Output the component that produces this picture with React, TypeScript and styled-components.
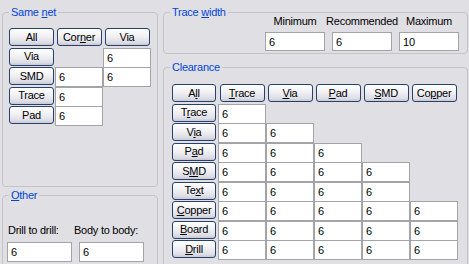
import React from 'react';
import styled, { createGlobalStyle } from 'styled-components';

const GlobalStyle = createGlobalStyle`
  html, body {
    margin: 0;
    background: #e0dfe3;
    font-family: "Liberation Sans", Arial, sans-serif;
    font-size: 11px;
    letter-spacing: -0.25px;
  }
`;

type Label = [string, string, string];

const sameHeader: Label[] = [
  ['All', '', ''],
  ['Cor', 'n', 'er'],
  ['Via', '', ''],
];

const clearanceHeader: Label[] = [
  ['', 'T', 'race'],
  ['', 'V', 'ia'],
  ['', 'P', 'ad'],
  ['', 'S', 'MD'],
  ['Co', 'p', 'per'],
];

const clearanceRows: { label: Label; count: number }[] = [
  { label: ['T', 'r', 'ace'], count: 1 },
  { label: ['V', 'i', 'a'], count: 2 },
  { label: ['P', 'a', 'd'], count: 3 },
  { label: ['S', 'M', 'D'], count: 4 },
  { label: ['Te', 'x', 't'], count: 4 },
  { label: ['', 'C', 'opper'], count: 5 },
  { label: ['', 'B', 'oard'], count: 5 },
  { label: ['', 'D', 'rill'], count: 5 },
];

function Caption({ label }: { label: Label }) {
  const [before, key, after] = label;
  return (
    <>
      {before}
      {key && <u>{key}</u>}
      {after}
    </>
  );
}

function App() {
  return (
    <>
      <GlobalStyle />
      <Page>
        <LeftColumn>
          <Group $height={175}>
            <Title>
              Same <u>n</u>et
            </Title>
            <SameNetGrid>
              {sameHeader.map((l, i) => (
                <HeadButton key={i}>
                  <Caption label={l} />
                </HeadButton>
              ))}
              <RowButton>Via</RowButton>
              <Cell $col={3} defaultValue="6" />
              <RowButton>SMD</RowButton>
              <Cell defaultValue="6" />
              <Cell defaultValue="6" />
              <RowButton>Trace</RowButton>
              <Cell defaultValue="6" />
              <RowButton>Pad</RowButton>
              <Cell defaultValue="6" />
            </SameNetGrid>
          </Group>
          <OtherGroup $height={80}>
            <Title>
              <u>O</u>ther
            </Title>
            <OtherLabels>
              <OtherLabel>Drill to drill:</OtherLabel>
              <OtherLabel>Body to body:</OtherLabel>
            </OtherLabels>
            <OtherInputs>
              <WideInput defaultValue="6" />
              <WideInput defaultValue="6" />
            </OtherInputs>
          </OtherGroup>
        </LeftColumn>
        <RightColumn>
          <Group $height={42}>
            <Title>
              Trace <u>w</u>idth
            </Title>
            <WidthGrid>
              <WidthLabel>Minimum</WidthLabel>
              <WidthLabel>Recommended</WidthLabel>
              <WidthLabel>Maximum</WidthLabel>
              <WidthInput defaultValue="6" />
              <WidthInput defaultValue="6" />
              <WidthInput defaultValue="10" />
            </WidthGrid>
          </Group>
          <ClearanceGroup $height={205}>
            <Title>Clearance</Title>
            <ClearanceGrid>
              <LabelButton>
                A<u>l</u>l
              </LabelButton>
              {clearanceHeader.map((l, i) => (
                <HeadButton key={i}>
                  <Caption label={l} />
                </HeadButton>
              ))}
              {clearanceRows.map((row, r) => (
                <React.Fragment key={r}>
                  <LabelButton>
                    <Caption label={row.label} />
                  </LabelButton>
                  {Array.from({ length: row.count }).map((_, c) => (
                    <Cell key={c} defaultValue="6" />
                  ))}
                </React.Fragment>
              ))}
            </ClearanceGrid>
          </ClearanceGroup>
        </RightColumn>
      </Page>
    </>
  );
}

const Page = styled.div`
  display: flex;
  gap: 5px;
  padding: 12px 0 0 2px;
  height: 264px;
  box-sizing: border-box;
  overflow: hidden;
`;
const LeftColumn = styled.div`
  width: 156px;
  display: flex;
  flex-direction: column;
`;
const RightColumn = styled.div`
  width: 305px;
  display: flex;
  flex-direction: column;
`;
const Group = styled.div<{ $height: number }>`
  position: relative;
  flex: none;
  box-sizing: border-box;
  height: ${p => p.$height}px;
  border: 1px solid #c4c3c8;
  border-radius: 4px;
`;
const OtherGroup = styled(Group)`
  margin-top: 8px;
  padding: 28px 0 0 4px;
`;
const ClearanceGroup = styled(Group)`
  margin-top: 13px;
  padding: 16px 0 0 8px;
`;
const Title = styled.span`
  position: absolute;
  top: -7px;
  left: 6px;
  padding: 0 2px;
  line-height: 13px;
  background: #e0dfe3;
  color: #0046d5;
`;
const Button = styled.button`
  box-sizing: border-box;
  height: 18px;
  padding: 0;
  border: 1px solid #28406a;
  border-radius: 3px;
  background: linear-gradient(#ffffff, #f1f1f4 45%, #dcdce5 85%, #c8c8d4);
  font-family: inherit;
  font-size: 11px;
  letter-spacing: inherit;
  color: #000;
  line-height: 15px;
  align-self: start;
`;
const HeadButton = styled(Button)`
  width: 45px;
  justify-self: center;
`;
const LabelButton = styled(Button)`
  width: 44px;
  grid-column: 1;
`;
const RowButton = styled(Button)`
  width: 45px;
  grid-column: 1;
  justify-self: center;
`;
const Input = styled.input`
  box-sizing: border-box;
  margin: 0;
  border: 1px solid #a4a3a8;
  background: #fff;
  font-family: inherit;
  font-size: 11px;
  color: #000;
  padding: 0 0 0 3px;
  outline: none;
`;
const Cell = styled(Input)<{ $col?: number }>`
  width: 100%;
  height: 20px;
  ${p => (p.$col ? `grid-column: ${p.$col};` : '')}
`;
const SameNetGrid = styled.div`
  display: grid;
  grid-template-columns: 47px 48px 48px;
  grid-auto-rows: 19.5px;
  padding: 15px 0 0 5px;
`;
const ClearanceGrid = styled.div`
  display: grid;
  grid-template-columns: 46px repeat(5, 48px);
  grid-auto-rows: 19.5px;
`;
const WidthGrid = styled.div`
  display: grid;
  grid-template-columns: repeat(3, 60px);
  column-gap: 7px;
  row-gap: 4px;
  justify-content: end;
  padding: 2px 8px 0 0;
`;
const WidthLabel = styled.span`
  justify-self: center;
  line-height: 13px;
  white-space: nowrap;
`;
const WidthInput = styled(Input)`
  width: 60px;
  height: 19px;
`;
const OtherLabels = styled.div`
  display: flex;
  line-height: 13px;
  padding-left: 1px;
`;
const OtherLabel = styled.span`
  width: 66px;
  white-space: nowrap;
`;
const OtherInputs = styled.div`
  display: flex;
  gap: 7px;
  margin-top: 5px;
`;
const WideInput = styled(Input)`
  width: 65px;
  height: 20px;
`;

export default App;
